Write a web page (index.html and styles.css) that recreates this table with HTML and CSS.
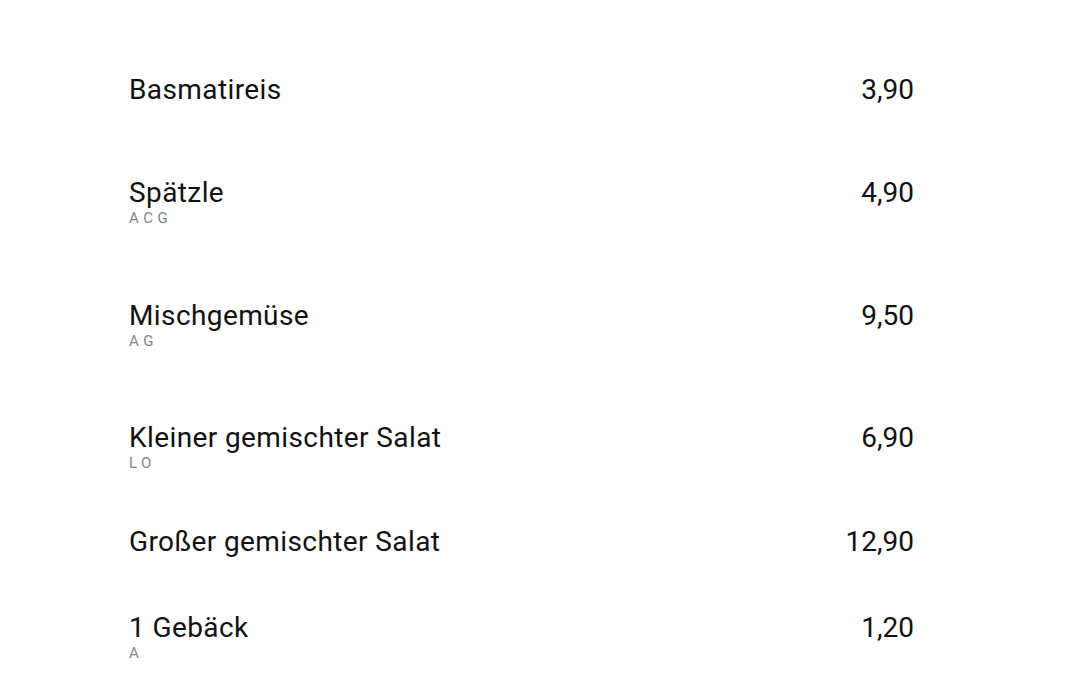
FILE: index.html
```html
<!DOCTYPE html>
<html lang="de">
<head>
<meta charset="utf-8">
<title>Beilagen</title>
<link rel="stylesheet" href="styles.css">
</head>
<body>
<main class="menu">
  <div class="item item-1">
    <div class="info"><div class="name">Basmatireis</div></div>
    <div class="price">3,90</div>
  </div>
  <div class="item item-2">
    <div class="info"><div class="name">Spätzle</div><div class="allergens">ACG</div></div>
    <div class="price">4,90</div>
  </div>
  <div class="item item-3">
    <div class="info"><div class="name">Mischgemüse</div><div class="allergens">AG</div></div>
    <div class="price">9,50</div>
  </div>
  <div class="item item-4">
    <div class="info"><div class="name">Kleiner gemischter Salat</div><div class="allergens">LO</div></div>
    <div class="price">6,90</div>
  </div>
  <div class="item item-5">
    <div class="info"><div class="name">Großer gemischter Salat</div></div>
    <div class="price">12,90</div>
  </div>
  <div class="item item-6">
    <div class="info"><div class="name">1 Gebäck</div><div class="allergens">A</div></div>
    <div class="price">1,20</div>
  </div>
</main>
</body>
</html>
```

FILE: styles.css
```css
html, body {
  margin: 0;
  padding: 0;
  background: #ffffff;
}

body {
  font-family: Roboto, "Noto Sans", Arial, sans-serif;
  color: #111111;
}

.menu {
  width: 785px;
  margin-left: 129px;
  padding-top: 74px;
  display: grid;
  grid-template-rows: 103px 123px 122px 104px 86px auto;
}

.item {
  display: flex;
  justify-content: space-between;
  align-items: flex-start;
}

.name,
.price {
  font-size: 28px;
  line-height: 32px;
}

.name {
  letter-spacing: 0.4px;
}

.allergens {
  font-size: 15px;
  line-height: 18px;
  letter-spacing: 4.5px;
  color: #858585;
}
```
